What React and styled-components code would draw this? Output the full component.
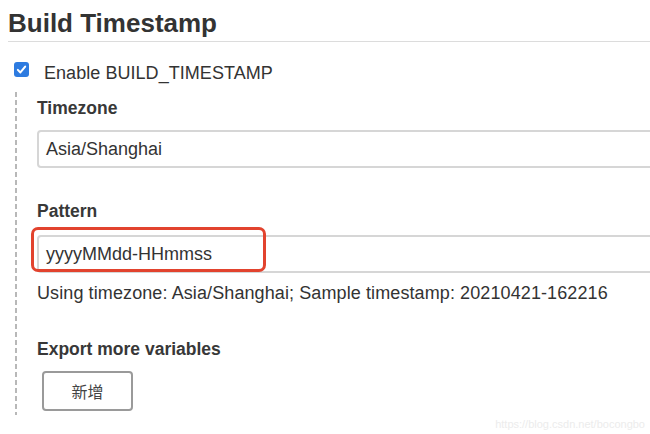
import styled, { createGlobalStyle } from 'styled-components';

const GlobalStyle = createGlobalStyle`
  html, body {
    margin: 0;
    padding: 0;
    background: #fff;
    overflow: hidden;
  }
  body {
    font-family: "Liberation Sans", Arial, sans-serif;
    color: #333;
  }
`;

const App = () => {
  return (
    <Page>
      <GlobalStyle />
      <Title>Build Timestamp</Title>
      <CheckRow>
        <CheckBox>
          <svg width="11" height="11" viewBox="0 0 12 12">
            <path
              d="M2 6.4 L4.8 9.2 L10 2.8"
              fill="none"
              stroke="#fff"
              strokeWidth="2.2"
              strokeLinecap="round"
              strokeLinejoin="round"
            />
          </svg>
        </CheckBox>
        <CheckLabel>Enable BUILD_TIMESTAMP</CheckLabel>
      </CheckRow>
      <Nested>
        <Field>
          <Label>Timezone</Label>
          <TextBox>Asia/Shanghai</TextBox>
        </Field>
        <Field $gap={33}>
          <Label>Pattern</Label>
          <Highlighted>
            <TextBox>yyyyMMdd-HHmmss</TextBox>
          </Highlighted>
        </Field>
        <Help>Using timezone: Asia/Shanghai; Sample timestamp: 20210421-162216</Help>
        <Field $gap={35}>
          <Label>Export more variables</Label>
          <AddButton>新增</AddButton>
        </Field>
      </Nested>
      <Watermark>https://blog.csdn.net/bocongbo</Watermark>
    </Page>
  );
};

export default App;

const Page = styled.div`
  position: relative;
  width: 650px;
  height: 434px;
  padding-left: 8px;
  box-sizing: border-box;
  overflow: hidden;
`;

const Title = styled.h1`
  margin: 0;
  padding-top: 8px;
  padding-bottom: 3px;
  font-size: 26px;
  line-height: 30px;
  font-weight: bold;
  color: #333;
  border-bottom: 1px solid #dcdcdc;
`;

const CheckRow = styled.div`
  display: flex;
  align-items: flex-start;
  margin-top: 20px;
  margin-left: 6px;
`;

const CheckBox = styled.span`
  display: flex;
  align-items: center;
  justify-content: center;
  width: 15px;
  height: 15px;
  border-radius: 3px;
  background: #2d7be0;
`;

const CheckLabel = styled.span`
  margin-left: 15px;
  font-size: 18px;
  line-height: 22px;
  letter-spacing: 0.05px;
  color: #333;
`;

const Nested = styled.div`
  margin-top: 8px;
  margin-left: 7px;
  padding-left: 22px;
  padding-top: 6px;
  padding-bottom: 4px;
  width: 700px;
  background-image: linear-gradient(#b8b8b8 62%, transparent 0);
  background-size: 2px 8px;
  background-repeat: repeat-y;
  background-position: 0 0;
`;

const Field = styled.div`
  display: flex;
  flex-direction: column;
  align-items: flex-start;
  margin-top: ${p => (p.$gap ? `${p.$gap}px` : '0')};
`;

const Label = styled.div`
  font-size: 17.5px;
  line-height: 20px;
  font-weight: bold;
  color: #383838;
  margin-bottom: 12px;
`;

const TextBox = styled.div`
  box-sizing: border-box;
  width: 680px;
  height: 38px;
  padding: 0 7px;
  display: flex;
  align-items: center;
  border: 2px solid #d6d6d6;
  border-radius: 4px;
  font-size: 18px;
  color: #333;
  background: #fff;
`;

const Highlighted = styled.div`
  position: relative;
  margin-top: 2px;

  &::after {
    content: '';
    position: absolute;
    left: -6px;
    top: -8px;
    width: 235px;
    height: 45px;
    box-sizing: border-box;
    border: 3px solid #e2432e;
    border-radius: 7px;
  }
`;

const Help = styled.div`
  margin-top: 9px;
  font-size: 18px;
  line-height: 22px;
  letter-spacing: 0.1px;
  color: #333;
`;

const AddButton = styled.button`
  margin-left: 5px;
  width: 91px;
  height: 40px;
  border: 2px solid #9a9a9a;
  border-radius: 4px;
  background: #fff;
  font-family: "Noto Sans CJK SC", sans-serif;
  font-size: 16px;
  color: #444;
  padding: 0;
`;

const Watermark = styled.div`
  position: absolute;
  right: 5px;
  bottom: 4px;
  font-size: 11px;
  color: #ececec;
`;
